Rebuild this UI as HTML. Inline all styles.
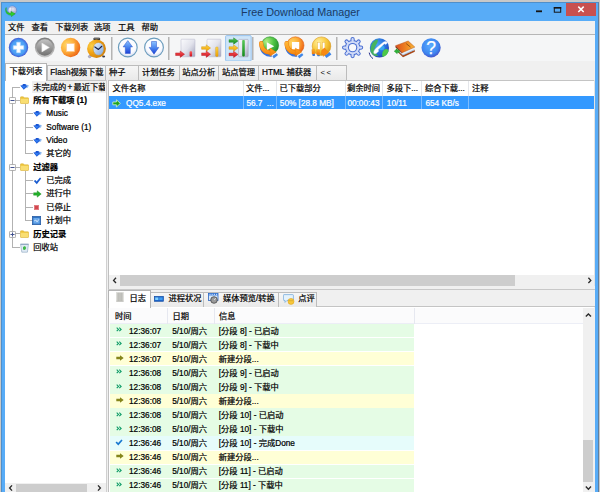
<!DOCTYPE html>
<html><head><meta charset="utf-8"><title>Free Download Manager</title>
<style>
*{margin:0;padding:0;box-sizing:border-box}
html,body{width:600px;height:492px;overflow:hidden;background:#c8c8c8}
body{position:relative;font-family:"Liberation Sans","Noto Sans CJK SC",sans-serif;font-size:8.25px;color:#000;line-height:1}
.a{position:absolute}
.t{position:absolute;white-space:nowrap;line-height:12px;height:12px;-webkit-text-stroke:0.22px currentColor}
.b{font-weight:bold}
.w{color:#fff}
#win{left:1px;top:2px;width:597.5px;height:492px;background:#58acf7;border:1px solid #4f8fca;border-right-color:#5f7f9f}
#title{left:0;top:3px;width:601px;height:19px;line-height:18px;text-align:center;font-size:10.8px;color:#1b3a63}
#close{left:566px;top:2.5px;width:30px;height:13px;background:#c8504f}
#menu{left:5px;top:21px;width:590px;height:13.5px;background:#f1f1f1}
#mline{left:5px;top:34px;width:590px;height:1px;background:#b6b6b6}
#tb{left:5px;top:35px;width:590px;height:26px;background:#f5f6f7}
.sep{position:absolute;top:37px;width:2px;height:23px;background:linear-gradient(90deg,#b4b4b4,#b4b4b4 50%,#d4d4d4 50%)}
#tabs{left:5px;top:61px;width:590px;height:19px;background:#f0f0f0}
.tab{position:absolute;top:65px;height:14.5px;border:1px solid #bcbcbc;border-bottom:none;background:linear-gradient(#f6f6f6,#e9e9e9)}
.tab.act{top:63px;height:18px;background:#fff;border-color:#b4b4b4;z-index:3}
#left{left:5px;top:79.5px;width:100.5px;height:413px;background:#fff;border-top:1px solid #c4c4c4}
#split{left:105.5px;top:79.5px;width:2.5px;height:413px;background:#f0f0f0;border-left:1px solid #d0d0d0}
#right{left:108px;top:79.5px;width:486px;height:206.5px;background:#fff;border-top:1px solid #c4c4c4;border-left:1px solid #c0c0c0}
#rfill{left:594px;top:79.5px;width:1px;height:413px;background:#e4e4e4}
.ln{position:absolute;background:#b2b2b2}
</style></head><body>
<div id="win" class="a"></div>
<svg class="a" style="left:0px;top:0px" width="24" height="20" viewBox="0 0 24 20">
<defs><radialGradient id="gl" cx="0.35" cy="0.3" r="0.8"><stop offset="0" stop-color="#f2f2fa"/><stop offset="0.6" stop-color="#c6c8e0"/><stop offset="1" stop-color="#8f9cc8"/></radialGradient></defs>
<circle cx="12.3" cy="10.3" r="4.4" fill="url(#gl)" stroke="#5f86d0" stroke-width="0.7"/>
<path d="M9.4 8 C11 7 13.6 7 15.2 8 M9.6 12 C11.4 11.4 13.4 11.4 15.6 12.2 M12.3 6 C11.4 8 11.4 12 12.3 14.6" stroke="#9aa6d0" stroke-width="0.5" fill="none"/>
<path d="M6.2 7.6 C5.4 11 7.6 13.4 11 13.2 L11 11.5 L15.2 13.8 L11.4 16.6 L11.2 15 C7 15.4 4.6 12 6.2 7.6Z" fill="#2ed02a" stroke="#1f9a1c" stroke-width="0.5" stroke-linejoin="round"/>
</svg>
<div id="title" class="a">Free Download Manager</div>
<div id="close" class="a"></div>
<svg class="a" style="left:530px;top:2px" width="70" height="16" viewBox="0 0 70 16">
<rect x="6" y="8.4" width="6" height="1.8" fill="#151515"/>
<rect x="24.3" y="5.6" width="6.4" height="4.6" fill="none" stroke="#151515" stroke-width="1"/>
<rect x="23.8" y="5" width="7.4" height="1.6" fill="#151515"/>
<path d="M48.3 4.6 L53.7 10 M53.7 4.6 L48.3 10" stroke="#fff" stroke-width="1.5" fill="none"/>
</svg>
<div id="menu" class="a"></div><div id="mline" class="a"></div>
<span class="t" style="left:8px;top:21.5px">文件</span>
<span class="t" style="left:31.5px;top:21.5px">查看</span>
<span class="t" style="left:55.3px;top:21.5px">下载列表</span>
<span class="t" style="left:94px;top:21.5px">选项</span>
<span class="t" style="left:118px;top:21.5px">工具</span>
<span class="t" style="left:141.5px;top:21.5px">帮助</span>
<div id="tb" class="a"></div>
<div class="sep" style="left:111px"></div>
<div class="sep" style="left:168px"></div>
<div class="sep" style="left:252px"></div>
<div class="sep" style="left:336px"></div>
<svg class="a" style="left:0;top:34px" width="600" height="29" viewBox="0 34 600 29">
<defs>
<radialGradient id="gAdd" cx="0.5" cy="0.5" r="0.5"><stop offset="0" stop-color="#5ab4ff"/><stop offset="0.72" stop-color="#4c9ef4"/><stop offset="0.9" stop-color="#4274e2"/><stop offset="1" stop-color="#4654c8"/></radialGradient>
<linearGradient id="gPlayO" x1="0" y1="0" x2="0" y2="1"><stop offset="0" stop-color="#7d7d7d"/><stop offset="1" stop-color="#c9c9c9"/></linearGradient>
<linearGradient id="gPlayI" x1="0" y1="0" x2="0" y2="1"><stop offset="0" stop-color="#c4c4c4"/><stop offset="1" stop-color="#707070"/></linearGradient>
<radialGradient id="gStop" cx="0.32" cy="0.36" r="0.75"><stop offset="0" stop-color="#ffdc6a"/><stop offset="0.5" stop-color="#fdae3a"/><stop offset="0.88" stop-color="#f0701c"/><stop offset="1" stop-color="#e2600f"/></radialGradient>
<radialGradient id="gClk" cx="0.25" cy="0.35" r="0.8"><stop offset="0" stop-color="#fbd048"/><stop offset="0.45" stop-color="#f2a416"/><stop offset="1" stop-color="#cf7e08"/></radialGradient>
<linearGradient id="gFace" x1="0" y1="0" x2="1" y2="1"><stop offset="0" stop-color="#eaf4ff"/><stop offset="1" stop-color="#7ea6de"/></linearGradient>
<radialGradient id="gWht" cx="0.5" cy="0.4" r="0.6"><stop offset="0" stop-color="#ffffff"/><stop offset="0.7" stop-color="#fafbff"/><stop offset="1" stop-color="#cfd6ee"/></radialGradient>
<linearGradient id="gArr" x1="0" y1="0" x2="0" y2="1"><stop offset="0" stop-color="#8cc2ff"/><stop offset="0.5" stop-color="#4a86f0"/><stop offset="1" stop-color="#1c3fd6"/></linearGradient>
<linearGradient id="gPage" x1="0" y1="0" x2="1" y2="1"><stop offset="0" stop-color="#fbfbfd"/><stop offset="0.5" stop-color="#e2e3ec"/><stop offset="1" stop-color="#a2a4bc"/></linearGradient>
<linearGradient id="gRed" x1="0" y1="0" x2="0" y2="1"><stop offset="0" stop-color="#ff5a5a"/><stop offset="1" stop-color="#c8101c"/></linearGradient>
<linearGradient id="gYel" x1="0" y1="0" x2="0" y2="1"><stop offset="0" stop-color="#ffd84a"/><stop offset="1" stop-color="#f0a000"/></linearGradient>
<linearGradient id="gGrn" x1="0" y1="0" x2="0" y2="1"><stop offset="0" stop-color="#58c858"/><stop offset="1" stop-color="#138a1c"/></linearGradient>
<radialGradient id="gGC" cx="0.3" cy="0.28" r="0.8"><stop offset="0" stop-color="#b4ee88"/><stop offset="0.5" stop-color="#52c646"/><stop offset="1" stop-color="#1f8f2a"/></radialGradient>
<radialGradient id="gYC" cx="0.35" cy="0.3" r="0.8"><stop offset="0" stop-color="#fff0a0"/><stop offset="0.55" stop-color="#f8c83a"/><stop offset="1" stop-color="#d89410"/></radialGradient>
<linearGradient id="gOA2" gradientUnits="userSpaceOnUse" x1="0" y1="42" x2="0" y2="57"><stop offset="0" stop-color="#ffb838"/><stop offset="0.55" stop-color="#fb9a1c"/><stop offset="1" stop-color="#f07808"/></linearGradient>
<linearGradient id="gOA" x1="0" y1="0" x2="0" y2="1"><stop offset="0" stop-color="#ffb030"/><stop offset="1" stop-color="#f07808"/></linearGradient>
<radialGradient id="gGlobe" cx="0.4" cy="0.35" r="0.7"><stop offset="0" stop-color="#4aa4f4"/><stop offset="0.7" stop-color="#2468d8"/><stop offset="1" stop-color="#2a3ca8"/></radialGradient>
<radialGradient id="gHelp" cx="0.45" cy="0.4" r="0.6"><stop offset="0" stop-color="#5aaaff"/><stop offset="0.7" stop-color="#3f88f0"/><stop offset="0.9" stop-color="#3f68dc"/><stop offset="1" stop-color="#4a58c8"/></radialGradient>
<linearGradient id="gBook" x1="0" y1="0.5" x2="1" y2="0.5"><stop offset="0" stop-color="#de4e1c"/><stop offset="0.6" stop-color="#f08a24"/><stop offset="1" stop-color="#f8b838"/></linearGradient>
</defs>
<circle cx="18.5" cy="47.5" r="9.7" fill="url(#gAdd)"/>
<path d="M16.7 42.3h3.6v3.4h3.4v3.6h-3.4v3.4h-3.6v-3.4h-3.4v-3.6h3.4z" fill="#fff" stroke="#bfe0ff" stroke-width="0.7" stroke-linejoin="round"/>
<circle cx="44.8" cy="47.5" r="9.9" fill="url(#gPlayO)"/>
<circle cx="44.8" cy="47.5" r="8.3" fill="url(#gPlayI)"/>
<path d="M41.9 43.1 L49.4 47.5 L41.9 51.9Z" fill="#fff" stroke="#e8e8e8" stroke-width="0.5"/>
<circle cx="70.6" cy="47.5" r="9.7" fill="url(#gStop)"/>
<rect x="66.5" y="43.6" width="7.8" height="7.8" fill="#fff" stroke="#ffc890" stroke-width="0.8"/>
<rect x="93.4" y="37.8" width="6.8" height="2.4" rx="1" fill="#3a3a3a"/><rect x="94" y="37.6" width="5.6" height="0.8" rx="0.4" fill="#9a9a9a"/>
<ellipse cx="90.3" cy="56" rx="2.2" ry="1.3" transform="rotate(-35 90.3 56)" fill="#b4b4cc" stroke="#6a6a88" stroke-width="0.4"/><ellipse cx="103.6" cy="56.5" rx="1.5" ry="1" fill="#3a3a48"/>
<ellipse cx="96.5" cy="48.7" rx="9.4" ry="9.2" fill="url(#gClk)"/>
<ellipse cx="98.5" cy="48.9" rx="5.4" ry="6.4" fill="url(#gFace)" stroke="#c88a20" stroke-width="0.5"/>
<path d="M94.9 46.9 L98.5 49.4 L101.8 46.3" fill="none" stroke="#1a2248" stroke-width="1.2" stroke-linecap="round" stroke-linejoin="round"/>
<circle cx="127.8" cy="47.5" r="9.4" fill="url(#gWht)" stroke="#6a9cbc" stroke-width="1.1"/>
<path d="M127.8 40.6 L132.5 46.9 L130.3 46.9 L130.3 53.5 L125.3 53.5 L125.3 46.9 L123.1 46.9Z" fill="url(#gArr)" stroke="#2a52c8" stroke-width="0.5" stroke-linejoin="round"/>
<circle cx="154" cy="47.5" r="9.4" fill="url(#gWht)" stroke="#6a9cbc" stroke-width="1.1"/>
<path d="M154 54.2 L158.8 47.4 L156.5 47.4 L156.5 41.5 L151.5 41.5 L151.5 47.4 L149.2 47.4Z" fill="url(#gArr)" stroke="#2a52c8" stroke-width="0.5" stroke-linejoin="round"/>
<rect x="181" y="39.2" width="14" height="17.6" rx="0.8" fill="url(#gPage)" stroke="#b4b6c8" stroke-width="0.5"/>
<rect x="189.6" y="51.2" width="2.5" height="5.4" rx="0.8" fill="url(#gRed)"/>
<path d="M175.6 52.900000000000006 h4.6 v-1.9 l4.4 3.2 l-4.4 3.2 v-1.9 h-4.6z" fill="url(#gRed)" stroke="#b01018" stroke-width="0.4" stroke-linejoin="round"/>
<rect x="207" y="39.2" width="14" height="17.6" rx="0.8" fill="url(#gPage)" stroke="#b4b6c8" stroke-width="0.5"/>
<rect x="215.6" y="47" width="2.5" height="9.6" rx="0.8" fill="url(#gYel)" stroke="#c88a00" stroke-width="0.3"/>
<path d="M201.6 46.7 h4.6 v-1.9 l4.4 3.2 l-4.4 3.2 v-1.9 h-4.6z" fill="url(#gYel)" stroke="#c88a00" stroke-width="0.4" stroke-linejoin="round"/>
<path d="M201.6 52.900000000000006 h4.6 v-1.9 l4.4 3.2 l-4.4 3.2 v-1.9 h-4.6z" fill="url(#gRed)" stroke="#b01018" stroke-width="0.4" stroke-linejoin="round"/>
<rect x="225.6" y="35.6" width="25.6" height="25.4" rx="1" fill="#cfe5f8" stroke="#8fc0ee" stroke-width="0.9"/>
<rect x="238.6" y="39.4" width="9.6" height="17.4" rx="0.8" fill="url(#gPage)" stroke="#9a9cb0" stroke-width="0.5"/>
<rect x="242.2" y="40" width="2.6" height="16.4" rx="0.8" fill="url(#gGrn)"/>
<path d="M229 39.7 h4.6 v-1.9 l4.4 3.2 l-4.4 3.2 v-1.9 h-4.6z" fill="url(#gGrn)" stroke="#0f7a18" stroke-width="0.4" stroke-linejoin="round"/>
<path d="M229 46.7 h4.6 v-1.9 l4.4 3.2 l-4.4 3.2 v-1.9 h-4.6z" fill="url(#gYel)" stroke="#c88a00" stroke-width="0.4" stroke-linejoin="round"/>
<path d="M229 53.1 h4.6 v-1.9 l4.4 3.2 l-4.4 3.2 v-1.9 h-4.6z" fill="url(#gRed)" stroke="#b01018" stroke-width="0.4" stroke-linejoin="round"/>
<path d="M272.4 56.0 L276.7 53.2 L278.0 55.0 L273.8 58.5Z" fill="#3f86e6"/>
<path d="M261.6 46.4 A8.83 8.83 0 0 0 271.6 54.8" fill="none" stroke="#3a74dc" stroke-width="3.8"/>
<circle cx="270" cy="45.4" r="8.6" fill="url(#gGC)" stroke="#1f8a24" stroke-width="0.6"/>
<path d="M266.8 42.2 L274.2 46.2 L266.8 50.2Z" fill="#fff"/>
<path d="M261.2 43.2 A8.83 8.83 0 0 0 270.3 52.5" fill="none" stroke="#e8780c" stroke-width="4.3" stroke-linecap="round"/>
<path d="M261.2 43.2 A8.83 8.83 0 0 0 270.3 52.5" fill="none" stroke="url(#gOA2)" stroke-width="3.5" stroke-linecap="round"/>
<path d="M270.0 48.1 L276.2 52.1 L270.0 56.2Z" fill="url(#gOA2)" stroke="#e8780c" stroke-width="0.4" stroke-linejoin="round"/>
<path d="M297.8 56.0 L302.1 53.2 L303.4 55.0 L299.2 58.5Z" fill="#3f86e6"/>
<path d="M287.0 46.4 A8.83 8.83 0 0 0 297.0 54.8" fill="none" stroke="#3a74dc" stroke-width="3.8"/>
<circle cx="295.4" cy="45.4" r="8.6" fill="url(#gStop)" stroke="#e0600f" stroke-width="0.6"/>
<rect x="292" y="42" width="7.2" height="7.2" fill="#fff"/>
<path d="M286.6 43.2 A8.83 8.83 0 0 0 295.7 52.5" fill="none" stroke="#e8780c" stroke-width="4.3" stroke-linecap="round"/>
<path d="M286.6 43.2 A8.83 8.83 0 0 0 295.7 52.5" fill="none" stroke="url(#gOA2)" stroke-width="3.5" stroke-linecap="round"/>
<path d="M295.4 48.1 L301.6 52.1 L295.4 56.2Z" fill="url(#gOA2)" stroke="#e8780c" stroke-width="0.4" stroke-linejoin="round"/>
<path d="M324.6 55.4 L329.6 52 L331.4 54.4 L326.4 58Z" fill="#3f86e6"/>
<rect x="312.4" y="53.4" width="2.6" height="2.6" rx="0.8" fill="#2f6fe0"/><rect x="317.2" y="53.6" width="2.8" height="2.6" rx="0.8" fill="#2f6fe0"/>
<circle cx="321.5" cy="46.2" r="9.3" fill="url(#gYC)" stroke="#d89a20" stroke-width="0.6"/>
<rect x="317.7" y="42.4" width="2.4" height="7.2" fill="#fff" stroke="#e8b040" stroke-width="0.4"/><rect x="322.5" y="42.4" width="2.4" height="7.2" fill="#fff" stroke="#e8b040" stroke-width="0.4"/>
<path d="M311.8 49.6 L314.4 49.2 L315 53.8 L312 54Z" fill="url(#gOA)" stroke="#e08a10" stroke-width="0.3"/>
<path d="M316.6 49.8 L319.4 49.8 L319.8 54.4 L316.8 54.4Z" fill="url(#gOA)" stroke="#e08a10" stroke-width="0.3"/>
<path d="M321.6 50.6 L324.4 47.8 L328.6 52.4 L323.2 56.6 L323.4 54.6 L321.4 54.4Z" fill="#f88a14" stroke="#e07808" stroke-width="0.3"/>
<path d="M352.60 41.00 L352.60 39.10 M357.27 42.93 L358.61 41.59 M359.20 47.60 L361.10 47.60 M357.27 52.27 L358.61 53.61 M352.60 54.20 L352.60 56.10 M347.93 52.27 L346.59 53.61 M346.00 47.60 L344.10 47.60 M347.93 42.93 L346.59 41.59" stroke="#4a6fd2" stroke-width="4.2" stroke-linecap="round" fill="none"/><circle cx="352.6" cy="47.6" r="7.7" fill="#4a6fd2"/><path d="M352.60 41.00 L352.60 39.10 M357.27 42.93 L358.61 41.59 M359.20 47.60 L361.10 47.60 M357.27 52.27 L358.61 53.61 M352.60 54.20 L352.60 56.10 M347.93 52.27 L346.59 53.61 M346.00 47.60 L344.10 47.60 M347.93 42.93 L346.59 41.59" stroke="#d0dbf8" stroke-width="2.2" stroke-linecap="round" fill="none"/><circle cx="352.6" cy="47.6" r="6.7" fill="#d0dbf8"/><circle cx="352.6" cy="47.6" r="4.7" fill="#4a6fd2"/><circle cx="352.6" cy="47.6" r="3.6" fill="#f8f9fb"/>
<circle cx="379.4" cy="47.9" r="9.6" fill="url(#gGlobe)"/>
<path d="M371.2 46 C372 42 375 39.6 378 39.4 C378 43 375.4 45 374.6 48 C374 51 376 54 378.6 55.6 C376 57 372 55 370.8 52 C370.2 50 370.4 48 371.2 46Z" fill="#48b850" opacity="0.9"/>
<path d="M384.4 49.6 C386.4 48.4 388.4 49.4 388.6 51 C388 54 385.4 56.4 382.6 57 C381.6 54.4 382.4 51 384.4 49.6Z" fill="#4cc848"/>
<path d="M378 47 C380 45 383 45 384.6 47 C385 49 383 51 381 50 C379 50 378 49 378 47Z" fill="#3ab4f4" opacity="0.8"/>
<path d="M373.8 53.2 C373.4 50.8 375.2 48.8 377.2 47.2 L383.6 42 C385 41 386.6 41.4 387.4 42.8 L386 44.4 L384.4 43.8 L378.2 49.4 L378.6 51.2 L377 52.8 C376 53.8 374.4 54 373.8 53.2Z" fill="#fff" stroke="#dfe8fa" stroke-width="0.4"/>
<path d="M369.2 52.6 C369.6 55.4 371.4 57.6 373 58.6" fill="none" stroke="#28308c" stroke-width="1"/>
<path d="M396 50.4 L403 57.2 L414.8 51.8 L414.8 50 L403 55.2 L396 48.6Z" fill="#a8481a"/>
<path d="M397.4 49.8 L402.8 54.6 L414.6 49.2 L414.4 47.4 L402.6 52.4 L397 47.6Z" fill="#e6f0fa"/>
<path d="M397.6 50.6 L402.8 55 L414.6 49.6" fill="none" stroke="#7aa8d8" stroke-width="0.6"/>
<path d="M395.6 45.7 L408.2 41 L414.8 47.1 L402.1 52.7Z" fill="url(#gBook)" stroke="#b4501a" stroke-width="0.5" stroke-linejoin="round"/>
<path d="M395.6 45.7 L402.1 52.7 L402.1 53.6 L395.4 47.2Z" fill="#8a2c10"/>
<path d="M406.2 43.6 L410.4 47" stroke="#6a3a10" stroke-width="0.7"/>
<path d="M394.2 51.2 L397.2 48.6 L397.2 50.2 L399.4 50.2 L399.4 52.4 L397.2 52.4 L397.2 53.8Z" fill="#2fb43a" stroke="#1a8a24" stroke-width="0.4"/>
<circle cx="431.1" cy="47.8" r="9.6" fill="url(#gHelp)"/>
<text x="431.2" y="53.9" text-anchor="middle" font-family="Liberation Sans, sans-serif" font-size="17.5" fill="#fff" stroke="#fff" stroke-width="0.25">?</text>
</svg>
<div id="tabs" class="a"></div>
<div class="tab act" style="left:5px;width:42.3px"></div>
<div class="tab" style="left:47.3px;width:58.7px"></div>
<div class="tab" style="left:105px;width:33.5px"></div>
<div class="tab" style="left:137.5px;width:42.0px"></div>
<div class="tab" style="left:178.5px;width:40.5px"></div>
<div class="tab" style="left:218px;width:41px"></div>
<div class="tab" style="left:258px;width:59px"></div>
<div class="tab" style="left:316px;width:31px"></div>
<span class="t" style="left:9.5px;top:65.5px;z-index:4">下载列表</span>
<span class="t" style="left:50.3px;top:66.5px;z-index:4">Flash视频下载</span>
<span class="t" style="left:109px;top:66.5px;z-index:4">种子</span>
<span class="t" style="left:142px;top:66.5px;z-index:4">计划任务</span>
<span class="t" style="left:182.3px;top:66.5px;z-index:4">站点分析</span>
<span class="t" style="left:222px;top:66.5px;z-index:4">站点管理</span>
<span class="t" style="left:262px;top:66.5px;z-index:4">HTML 捕获器</span>
<span class="t" style="left:320.5px;top:66.5px;z-index:4;letter-spacing:1.6px;font-size:7.6px;-webkit-text-stroke:0">&lt;&lt;</span>
<div id="left" class="a"></div><div id="split" class="a"></div><div id="right" class="a"></div><div id="rfill" class="a"></div>
<div class="a" style="left:31.5px;top:81px;width:74px;height:12px;background:#f0f0f0"></div>
<div class="ln" style="left:11.8px;top:87.00px;width:1px;height:160.32px"></div><div class="ln" style="left:12.3px;top:86.50px;width:7.699999999999999px;height:1px"></div><div class="ln" style="left:12.3px;top:99.86px;width:7.699999999999999px;height:1px"></div><div class="ln" style="left:12.3px;top:166.66px;width:7.699999999999999px;height:1px"></div><div class="ln" style="left:12.3px;top:233.46px;width:7.699999999999999px;height:1px"></div><div class="ln" style="left:12.3px;top:246.82px;width:7.699999999999999px;height:1px"></div><div class="ln" style="left:24.7px;top:104.36px;width:1px;height:49.44px"></div><div class="ln" style="left:25.2px;top:113.22px;width:7.800000000000001px;height:1px"></div><div class="ln" style="left:25.2px;top:126.58px;width:7.800000000000001px;height:1px"></div><div class="ln" style="left:25.2px;top:139.94px;width:7.800000000000001px;height:1px"></div><div class="ln" style="left:25.2px;top:153.30px;width:7.800000000000001px;height:1px"></div><div class="ln" style="left:24.7px;top:171.16px;width:1px;height:49.44px"></div><div class="ln" style="left:25.2px;top:180.02px;width:7.800000000000001px;height:1px"></div><div class="ln" style="left:25.2px;top:193.38px;width:7.800000000000001px;height:1px"></div><div class="ln" style="left:25.2px;top:206.74px;width:7.800000000000001px;height:1px"></div><div class="ln" style="left:25.2px;top:220.10px;width:7.800000000000001px;height:1px"></div>
<svg class="a" style="left:9px;top:96.96px" width="7" height="7" viewBox="0 0 6.7 6.7"><rect x="0.4" y="0.4" width="5.9" height="5.9" rx="0.8" fill="#fdfdfd" stroke="#9a9a9a" stroke-width="0.8"/><rect x="1.4" y="2.9" width="3.9" height="0.9" fill="#3a4a8a"/></svg>
<svg class="a" style="left:9px;top:163.76px" width="7" height="7" viewBox="0 0 6.7 6.7"><rect x="0.4" y="0.4" width="5.9" height="5.9" rx="0.8" fill="#fdfdfd" stroke="#9a9a9a" stroke-width="0.8"/><rect x="1.4" y="2.9" width="3.9" height="0.9" fill="#3a4a8a"/></svg>
<svg class="a" style="left:9px;top:230.56px" width="7" height="7" viewBox="0 0 6.7 6.7"><rect x="0.4" y="0.4" width="5.9" height="5.9" rx="0.8" fill="#fdfdfd" stroke="#9a9a9a" stroke-width="0.8"/><rect x="1.4" y="2.9" width="3.9" height="0.9" fill="#3a4a8a"/><rect x="2.9" y="1.4" width="0.9" height="3.9" fill="#3a4a8a"/></svg>
<svg class="a" style="left:20.3px;top:83.40px" width="9" height="8" viewBox="0 0 9 8"><path d="M4.4 1 L8.8 2.2 L8 4.6 L5 5.4Z" fill="#8fbcf2"/><path d="M0.3 2.4 L2.6 2.2 L2.8 1 L5.6 1 L5.8 2.4 L7.4 2.8 L3.8 6.8Z" fill="#1a56d4"/><path d="M1.4 2.9 L6 3 L3.8 5.8Z" fill="#2f7af0"/></svg>
<svg class="a" style="left:20.3px;top:96.36px" width="9" height="8" viewBox="0 0 9 8"><path d="M0.4 1.4 Q0.4 0.8 1 0.8 L3.4 0.8 L4.2 1.8 L8 1.8 Q8.6 1.8 8.6 2.4 L8.6 7 Q8.6 7.4 8 7.4 L1 7.4 Q0.4 7.4 0.4 7Z" fill="#efc63c" stroke="#d4a82c" stroke-width="0.5"/><rect x="0.8" y="2.8" width="7.4" height="4.2" fill="#f9de72"/></svg>
<svg class="a" style="left:33.3px;top:110.12px" width="9" height="8" viewBox="0 0 9 8"><path d="M4.4 1 L8.8 2.2 L8 4.6 L5 5.4Z" fill="#8fbcf2"/><path d="M0.3 2.4 L2.6 2.2 L2.8 1 L5.6 1 L5.8 2.4 L7.4 2.8 L3.8 6.8Z" fill="#1a56d4"/><path d="M1.4 2.9 L6 3 L3.8 5.8Z" fill="#2f7af0"/></svg>
<svg class="a" style="left:33.3px;top:123.48px" width="9" height="8" viewBox="0 0 9 8"><path d="M4.4 1 L8.8 2.2 L8 4.6 L5 5.4Z" fill="#8fbcf2"/><path d="M0.3 2.4 L2.6 2.2 L2.8 1 L5.6 1 L5.8 2.4 L7.4 2.8 L3.8 6.8Z" fill="#1a56d4"/><path d="M1.4 2.9 L6 3 L3.8 5.8Z" fill="#2f7af0"/></svg>
<svg class="a" style="left:33.3px;top:136.84px" width="9" height="8" viewBox="0 0 9 8"><path d="M4.4 1 L8.8 2.2 L8 4.6 L5 5.4Z" fill="#8fbcf2"/><path d="M0.3 2.4 L2.6 2.2 L2.8 1 L5.6 1 L5.8 2.4 L7.4 2.8 L3.8 6.8Z" fill="#1a56d4"/><path d="M1.4 2.9 L6 3 L3.8 5.8Z" fill="#2f7af0"/></svg>
<svg class="a" style="left:33.3px;top:150.20px" width="9" height="8" viewBox="0 0 9 8"><path d="M4.4 1 L8.8 2.2 L8 4.6 L5 5.4Z" fill="#8fbcf2"/><path d="M0.3 2.4 L2.6 2.2 L2.8 1 L5.6 1 L5.8 2.4 L7.4 2.8 L3.8 6.8Z" fill="#1a56d4"/><path d="M1.4 2.9 L6 3 L3.8 5.8Z" fill="#2f7af0"/></svg>
<svg class="a" style="left:20.3px;top:163.16px" width="9" height="8" viewBox="0 0 9 8"><path d="M0.4 1.4 Q0.4 0.8 1 0.8 L3.4 0.8 L4.2 1.8 L8 1.8 Q8.6 1.8 8.6 2.4 L8.6 7 Q8.6 7.4 8 7.4 L1 7.4 Q0.4 7.4 0.4 7Z" fill="#efc63c" stroke="#d4a82c" stroke-width="0.5"/><rect x="0.8" y="2.8" width="7.4" height="4.2" fill="#f9de72"/></svg>
<svg class="a" style="left:33px;top:176.52px" width="9" height="8" viewBox="0 0 9 8"><path d="M0.8 4 L2.4 3 L3.6 4.6 L7 0.6 L8.2 1.6 L3.8 7.2Z" fill="#1a5cd0"/></svg>
<svg class="a" style="left:33px;top:189.88px" width="9" height="8" viewBox="0 0 9 8"><path d="M0.6 2.8 H4.2 V0.8 L8.2 4 L4.2 7.2 V5.2 H0.6Z" fill="#22b02a" stroke="#168a1c" stroke-width="0.4"/></svg>
<div class="a" style="left:34.2px;top:204.64px;width:5.2px;height:5.2px;background:#d2474f;border:0.5px solid #e07a80"></div>
<svg class="a" style="left:32.4px;top:216.00px" width="9" height="9" viewBox="0 0 9 9"><rect x="0.3" y="0.3" width="8.4" height="8.4" fill="#2f74c4" stroke="#1c4f9a" stroke-width="0.6"/><rect x="1.4" y="2" width="6.2" height="5.6" fill="#6aa8ea"/><path d="M2 5 L4 4 L5 6 L7 3.2" stroke="#e8f2ff" stroke-width="0.7" fill="none"/></svg>
<svg class="a" style="left:20.3px;top:229.96px" width="9" height="8" viewBox="0 0 9 8"><path d="M0.4 1.4 Q0.4 0.8 1 0.8 L3.4 0.8 L4.2 1.8 L8 1.8 Q8.6 1.8 8.6 2.4 L8.6 7 Q8.6 7.4 8 7.4 L1 7.4 Q0.4 7.4 0.4 7Z" fill="#efc63c" stroke="#d4a82c" stroke-width="0.5"/><rect x="0.8" y="2.8" width="7.4" height="4.2" fill="#f9de72"/></svg>
<svg class="a" style="left:20.3px;top:242.52px" width="9" height="10" viewBox="0 0 9 10"><path d="M0.6 1.4 L8.4 1.4 L7.4 9.2 L1.8 9.2Z" fill="#dfeaf4" stroke="#8aa4be" stroke-width="0.6"/><path d="M0.4 1.2 H8.6" stroke="#7e98b4" stroke-width="0.9"/><path d="M3 4 L5 3 L6.2 5 L5 7 L3 6.4Z" fill="#3fb848"/></svg>
<span class="t" style="left:33.3px;top:81.60px;width:71.4px;overflow:hidden">未完成的<span style="margin:0 1.1px 0 1.3px">+</span>最近下载</span>
<span class="t b" style="left:33.3px;top:94.96px">所有下载项 (1)</span>
<span class="t" style="left:46.3px;top:108.32px">Music</span>
<span class="t" style="left:46.3px;top:121.68px">Software (1)</span>
<span class="t" style="left:46.3px;top:135.04px">Video</span>
<span class="t" style="left:46.3px;top:148.40px">其它的</span>
<span class="t b" style="left:33.3px;top:161.76px">过滤器</span>
<span class="t" style="left:46.3px;top:175.12px">已完成</span>
<span class="t" style="left:46.3px;top:188.48px">进行中</span>
<span class="t" style="left:46.3px;top:201.84px">已停止</span>
<span class="t" style="left:46.3px;top:215.20px">计划中</span>
<span class="t b" style="left:33.3px;top:228.56px">历史记录</span>
<span class="t" style="left:33.3px;top:241.92px">回收站</span>
<div class="a" style="left:5px;top:483px;width:100.5px;height:9px;background:#f0f0f0"></div>
<div class="a" style="left:16px;top:483.5px;width:71px;height:9px;background:#cdcdcd"></div>
<svg class="a" style="left:5px;top:483px" width="101" height="9" viewBox="0 0 101 9"><path d="M7 2.4 L4.6 5 L7 7.6" stroke="#2a2a2a" stroke-width="1.35" fill="none"/><path d="M93 2.4 L95.4 5 L93 7.6" stroke="#2a2a2a" stroke-width="1.35" fill="none"/></svg>
<div class="a" style="left:109px;top:80.5px;width:485px;height:15.5px;background:#fff"></div>
<div class="a" style="left:242.5px;top:80.5px;width:1px;height:15.5px;background:#e4e6ea"></div>
<div class="a" style="left:275.9px;top:80.5px;width:1px;height:15.5px;background:#e4e6ea"></div>
<div class="a" style="left:344.5px;top:80.5px;width:1px;height:15.5px;background:#e4e6ea"></div>
<div class="a" style="left:382.1px;top:80.5px;width:1px;height:15.5px;background:#e4e6ea"></div>
<div class="a" style="left:421.1px;top:80.5px;width:1px;height:15.5px;background:#e4e6ea"></div>
<div class="a" style="left:468.3px;top:80.5px;width:1px;height:15.5px;background:#e4e6ea"></div>
<span class="t" style="left:112.4px;top:83px">文件名称</span>
<span class="t" style="left:246px;top:83px">文件...</span>
<span class="t" style="left:279.4px;top:83px">已下载部分</span>
<span class="t" style="left:347px;top:83px">剩余时间</span>
<span class="t" style="left:386.4px;top:83px">多段下...</span>
<span class="t" style="left:425px;top:83px">综合下载...</span>
<span class="t" style="left:472px;top:83px">注释</span>
<div class="a" style="left:109px;top:96.3px;width:485px;height:13px;background:#3399ff"></div>
<div class="a" style="left:242.5px;top:96.3px;width:1px;height:13px;background:#7cbcff"></div>
<div class="a" style="left:275.9px;top:96.3px;width:1px;height:13px;background:#7cbcff"></div>
<div class="a" style="left:344.5px;top:96.3px;width:1px;height:13px;background:#7cbcff"></div>
<div class="a" style="left:382.1px;top:96.3px;width:1px;height:13px;background:#7cbcff"></div>
<div class="a" style="left:421.1px;top:96.3px;width:1px;height:13px;background:#7cbcff"></div>
<div class="a" style="left:468.3px;top:96.3px;width:1px;height:13px;background:#7cbcff"></div>
<svg class="a" style="left:112px;top:98.6px" width="9" height="9" viewBox="0 0 9 9"><path d="M0.8 3 H4.4 V0.8 L8.4 4.4 L4.4 8 V5.8 H0.8Z" fill="#1fa21f" stroke="#d4f6cc" stroke-width="0.8" stroke-linejoin="round"/></svg>
<span class="t w" style="left:126.0px;top:98px">QQ5.4.exe</span>
<span class="t w" style="left:246.4px;top:98px">56.7</span>
<span class="t w" style="left:266.79999999999995px;top:98px">...</span>
<span class="t w" style="left:279.79999999999995px;top:98px">50% [28.8 MB]</span>
<span class="t w" style="left:347.4px;top:98px">00:00:43</span>
<span class="t w" style="left:386.79999999999995px;top:98px">10/11</span>
<span class="t w" style="left:425.4px;top:98px">654 KB/s</span>
<div class="a" style="left:109px;top:274.8px;width:485px;height:11px;background:#f0f0f0"></div>
<div class="a" style="left:120px;top:275.2px;width:394.6px;height:10.4px;background:#cdcdcd"></div>
<svg class="a" style="left:110px;top:274.8px" width="484" height="11" viewBox="0 0 484 11"><path d="M6 2.8 L3.6 5.4 L6 8" stroke="#2a2a2a" stroke-width="1.35" fill="none"/><path d="M478.4 2.8 L480.8 5.4 L478.4 8" stroke="#2a2a2a" stroke-width="1.35" fill="none"/></svg>
<div class="a" style="left:108px;top:286px;width:487px;height:206px;background:#f0f0f0;border-left:1px solid #c0c0c0"></div>
<div class="a" style="left:108px;top:288.6px;width:487px;height:1px;background:#c8c8c8"></div>
<div class="a" style="left:108px;top:306.4px;width:487px;height:1px;background:#c4c4c4"></div>
<div class="a" style="left:108px;top:307.4px;width:486px;height:185px;background:#fff;border-left:1px solid #c0c0c0"></div>
<div class="a" style="left:108px;top:290px;width:43px;height:17.6px;background:#fff;border:1px solid #b4b4b4;border-bottom:none;z-index:3"></div>
<div class="a" style="left:150px;top:291.6px;width:54.400000000000006px;height:15px;background:linear-gradient(#f6f6f6,#e9e9e9);border:1px solid #bcbcbc;border-bottom:none"></div>
<div class="a" style="left:203.4px;top:291.6px;width:75.99999999999997px;height:15px;background:linear-gradient(#f6f6f6,#e9e9e9);border:1px solid #bcbcbc;border-bottom:none"></div>
<div class="a" style="left:278.4px;top:291.6px;width:38.60000000000002px;height:15px;background:linear-gradient(#f6f6f6,#e9e9e9);border:1px solid #bcbcbc;border-bottom:none"></div>
<svg class="a" style="left:116px;top:292.4px;z-index:4" width="8" height="10" viewBox="0 0 8 10"><rect x="0.4" y="0.4" width="7" height="8.8" fill="#c9c9c4" stroke="#dcdcd8" stroke-width="0.6"/><path d="M2.4 0.8 V9 M4 0.8 V9 M5.6 0.8 V9" stroke="#b4b4ae" stroke-width="0.6"/><path d="M0.4 9.3 H7.6" stroke="#a8a8a4" stroke-width="0.6"/></svg>
<svg class="a" style="left:153.6px;top:295.6px" width="10" height="6" viewBox="0 0 10 6"><rect x="0.3" y="0.3" width="9.2" height="5" fill="#1c64c8" stroke="#0f4aa0" stroke-width="0.6"/><rect x="1.2" y="1.4" width="3.2" height="2.6" fill="#7fd0ff"/><rect x="5.2" y="1.4" width="3.4" height="2.6" fill="#3f9cf0"/></svg>
<svg class="a" style="left:208.4px;top:293.4px" width="11" height="11" viewBox="0 0 11 11"><rect x="0.4" y="0.4" width="9.6" height="7" fill="#d8e8f8" stroke="#2a64c0" stroke-width="0.8"/><rect x="0.4" y="0.4" width="9.6" height="2" fill="#2f74d8"/><path d="M1.4 1.4 h1.2 M3.6 1.4 h1.2 M5.8 1.4 h1.2 M8 1.4 h1.2" stroke="#fff" stroke-width="0.8"/><circle cx="6" cy="7" r="3.3" fill="#9a9a9a" stroke="#484848" stroke-width="0.8"/><path d="M6 7 L8 5.2" stroke="#e8e8e8" stroke-width="0.8"/></svg>
<svg class="a" style="left:282.6px;top:293.6px" width="12" height="11" viewBox="0 0 12 11"><path d="M1 0.6 H9.6 Q10.4 0.6 10.4 1.4 V5.6 Q10.4 6.4 9.6 6.4 H4 L2 8.4 V6.4 H1 Q0.4 6.4 0.4 5.6 V1.4 Q0.4 0.6 1 0.6Z" fill="#e4f2fc" stroke="#6aa4d8" stroke-width="0.7"/><circle cx="8" cy="7.4" r="3" fill="#f8c83a" stroke="#d89a10" stroke-width="0.5"/><circle cx="7" cy="6.8" r="0.4" fill="#5a3a00"/><circle cx="9" cy="6.8" r="0.4" fill="#5a3a00"/></svg>
<span class="t" style="left:129.4px;top:292.6px;z-index:4">日志</span>
<span class="t" style="left:168.6px;top:293.2px;z-index:4">进程状况</span>
<span class="t" style="left:223px;top:293.2px;z-index:4">媒体预览/转换</span>
<span class="t" style="left:298.2px;top:293.2px;z-index:4">点评</span>
<div class="a" style="left:110px;top:307.6px;width:473px;height:16.6px;background:#fbfbfc;border-bottom:1px solid #eceef6"></div>
<div class="a" style="left:166.9px;top:307.6px;width:1px;height:16px;background:#e6e8f0"></div>
<div class="a" style="left:213.5px;top:307.6px;width:1px;height:16px;background:#e6e8f0"></div>
<div class="a" style="left:414.1px;top:307.6px;width:1px;height:16px;background:#e6e8f0"></div>
<span class="t" style="left:115px;top:311px">时间</span>
<span class="t" style="left:172.4px;top:311px">日期</span>
<span class="t" style="left:219px;top:311px">信息</span>
<div class="a" style="left:110px;top:324.00px;width:304.4px;height:13.36px;background:#e5fce5"></div>
<svg class="a" style="left:116.2px;top:327.30px" width="6" height="5" viewBox="0 0 6 5"><path d="M0.7 0.7 L2.5 2.4 L0.7 4.1 M3.3 0.7 L5.1 2.4 L3.3 4.1" stroke="#0f9c68" stroke-width="1.15" fill="none"/></svg>
<span class="t" style="left:129px;top:325.60px">12:36:07</span><span class="t" style="left:172.2px;top:325.60px">5/10/周六</span><span class="t" style="left:218.8px;top:325.60px">[分段 8] - 已启动</span>
<div class="a" style="left:110px;top:338.06px;width:304.4px;height:13.36px;background:#e5fce5"></div>
<svg class="a" style="left:116.2px;top:341.36px" width="6" height="5" viewBox="0 0 6 5"><path d="M0.7 0.7 L2.5 2.4 L0.7 4.1 M3.3 0.7 L5.1 2.4 L3.3 4.1" stroke="#0f9c68" stroke-width="1.15" fill="none"/></svg>
<span class="t" style="left:129px;top:339.66px">12:36:07</span><span class="t" style="left:172.2px;top:339.66px">5/10/周六</span><span class="t" style="left:218.8px;top:339.66px">[分段 8] - 下载中</span>
<div class="a" style="left:110px;top:352.12px;width:304.4px;height:13.36px;background:#ffffd6"></div>
<svg class="a" style="left:115.6px;top:355.02px" width="8" height="6" viewBox="0 0 8 6"><path d="M0.3 1.7 H4 V0.2 L7.7 3 L4 5.8 V4.3 H0.3Z" fill="#85851a"/></svg>
<span class="t" style="left:129px;top:353.72px">12:36:07</span><span class="t" style="left:172.2px;top:353.72px">5/10/周六</span><span class="t" style="left:218.8px;top:353.72px">新建分段...</span>
<div class="a" style="left:110px;top:366.18px;width:304.4px;height:13.36px;background:#e5fce5"></div>
<svg class="a" style="left:116.2px;top:369.48px" width="6" height="5" viewBox="0 0 6 5"><path d="M0.7 0.7 L2.5 2.4 L0.7 4.1 M3.3 0.7 L5.1 2.4 L3.3 4.1" stroke="#0f9c68" stroke-width="1.15" fill="none"/></svg>
<span class="t" style="left:129px;top:367.78px">12:36:08</span><span class="t" style="left:172.2px;top:367.78px">5/10/周六</span><span class="t" style="left:218.8px;top:367.78px">[分段 9] - 已启动</span>
<div class="a" style="left:110px;top:380.24px;width:304.4px;height:13.36px;background:#e5fce5"></div>
<svg class="a" style="left:116.2px;top:383.54px" width="6" height="5" viewBox="0 0 6 5"><path d="M0.7 0.7 L2.5 2.4 L0.7 4.1 M3.3 0.7 L5.1 2.4 L3.3 4.1" stroke="#0f9c68" stroke-width="1.15" fill="none"/></svg>
<span class="t" style="left:129px;top:381.84px">12:36:08</span><span class="t" style="left:172.2px;top:381.84px">5/10/周六</span><span class="t" style="left:218.8px;top:381.84px">[分段 9] - 下载中</span>
<div class="a" style="left:110px;top:394.30px;width:304.4px;height:13.36px;background:#ffffd6"></div>
<svg class="a" style="left:115.6px;top:397.20px" width="8" height="6" viewBox="0 0 8 6"><path d="M0.3 1.7 H4 V0.2 L7.7 3 L4 5.8 V4.3 H0.3Z" fill="#85851a"/></svg>
<span class="t" style="left:129px;top:395.90px">12:36:08</span><span class="t" style="left:172.2px;top:395.90px">5/10/周六</span><span class="t" style="left:218.8px;top:395.90px">新建分段...</span>
<div class="a" style="left:110px;top:408.36px;width:304.4px;height:13.36px;background:#e5fce5"></div>
<svg class="a" style="left:116.2px;top:411.66px" width="6" height="5" viewBox="0 0 6 5"><path d="M0.7 0.7 L2.5 2.4 L0.7 4.1 M3.3 0.7 L5.1 2.4 L3.3 4.1" stroke="#0f9c68" stroke-width="1.15" fill="none"/></svg>
<span class="t" style="left:129px;top:409.96px">12:36:08</span><span class="t" style="left:172.2px;top:409.96px">5/10/周六</span><span class="t" style="left:218.8px;top:409.96px">[分段 10] - 已启动</span>
<div class="a" style="left:110px;top:422.42px;width:304.4px;height:13.36px;background:#e5fce5"></div>
<svg class="a" style="left:116.2px;top:425.72px" width="6" height="5" viewBox="0 0 6 5"><path d="M0.7 0.7 L2.5 2.4 L0.7 4.1 M3.3 0.7 L5.1 2.4 L3.3 4.1" stroke="#0f9c68" stroke-width="1.15" fill="none"/></svg>
<span class="t" style="left:129px;top:424.02px">12:36:08</span><span class="t" style="left:172.2px;top:424.02px">5/10/周六</span><span class="t" style="left:218.8px;top:424.02px">[分段 10] - 下载中</span>
<div class="a" style="left:110px;top:436.48px;width:304.4px;height:13.36px;background:#e6fcfb"></div>
<svg class="a" style="left:115.4px;top:439.08px" width="8" height="7" viewBox="0 0 8 7"><path d="M0.5 3.6 L1.9 2.6 L3.1 4 L6.4 0.4 L7.6 1.4 L3.3 6.6Z" fill="#1878d0"/></svg>
<span class="t" style="left:129px;top:438.08px">12:36:46</span><span class="t" style="left:172.2px;top:438.08px">5/10/周六</span><span class="t" style="left:218.8px;top:438.08px">[分段 10] - 完成Done</span>
<div class="a" style="left:110px;top:450.54px;width:304.4px;height:13.36px;background:#ffffd6"></div>
<svg class="a" style="left:115.6px;top:453.44px" width="8" height="6" viewBox="0 0 8 6"><path d="M0.3 1.7 H4 V0.2 L7.7 3 L4 5.8 V4.3 H0.3Z" fill="#85851a"/></svg>
<span class="t" style="left:129px;top:452.14px">12:36:46</span><span class="t" style="left:172.2px;top:452.14px">5/10/周六</span><span class="t" style="left:218.8px;top:452.14px">新建分段...</span>
<div class="a" style="left:110px;top:464.60px;width:304.4px;height:13.36px;background:#e5fce5"></div>
<svg class="a" style="left:116.2px;top:467.90px" width="6" height="5" viewBox="0 0 6 5"><path d="M0.7 0.7 L2.5 2.4 L0.7 4.1 M3.3 0.7 L5.1 2.4 L3.3 4.1" stroke="#0f9c68" stroke-width="1.15" fill="none"/></svg>
<span class="t" style="left:129px;top:466.20px">12:36:46</span><span class="t" style="left:172.2px;top:466.20px">5/10/周六</span><span class="t" style="left:218.8px;top:466.20px">[分段 11] - 已启动</span>
<div class="a" style="left:110px;top:478.66px;width:304.4px;height:13.36px;background:#e5fce5"></div>
<svg class="a" style="left:116.2px;top:481.96px" width="6" height="5" viewBox="0 0 6 5"><path d="M0.7 0.7 L2.5 2.4 L0.7 4.1 M3.3 0.7 L5.1 2.4 L3.3 4.1" stroke="#0f9c68" stroke-width="1.15" fill="none"/></svg>
<span class="t" style="left:129px;top:480.26px">12:36:46</span><span class="t" style="left:172.2px;top:480.26px">5/10/周六</span><span class="t" style="left:218.8px;top:480.26px">[分段 11] - 下载中</span>
<div class="a" style="left:583px;top:307.6px;width:11px;height:185px;background:#f0f0f0"></div>
<div class="a" style="left:583.4px;top:440.4px;width:9.8px;height:41.6px;background:#cdcdcd"></div>
<svg class="a" style="left:583px;top:307.6px" width="11" height="185" viewBox="0 0 11 185"><path d="M2.8 8.6 L5.4 6 L8 8.6" stroke="#2a2a2a" stroke-width="1.35" fill="none"/><path d="M2.8 178.6 L5.4 181.2 L8 178.6" stroke="#2a2a2a" stroke-width="1.35" fill="none"/></svg>
</body></html>
